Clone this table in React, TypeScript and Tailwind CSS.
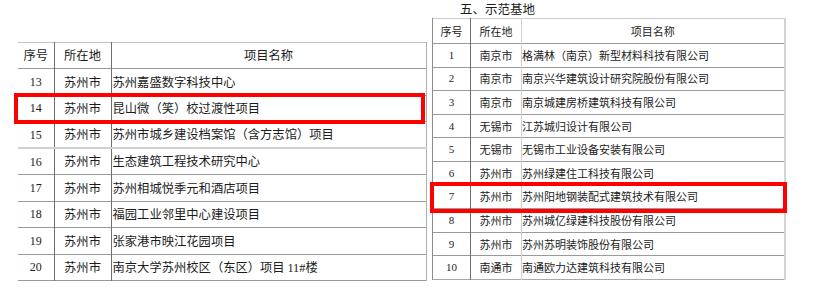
import React from "react";

const leftRows: [string, string, string][] = [
  ["13", "苏州市", "苏州嘉盛数字科技中心"],
  ["14", "苏州市", "昆山微（笑）校过渡性项目"],
  ["15", "苏州市", "苏州市城乡建设档案馆（含方志馆）项目"],
  ["16", "苏州市", "生态建筑工程技术研究中心"],
  ["17", "苏州市", "苏州相城悦季元和酒店项目"],
  ["18", "苏州市", "福园工业邻里中心建设项目"],
  ["19", "苏州市", "张家港市映江花园项目"],
  ["20", "苏州市", "南京大学苏州校区（东区）项目 "],
];

const rightRows: [string, string, string][] = [
  ["1", "南京市", "格满林（南京）新型材料科技有限公司"],
  ["2", "南京市", "南京兴华建筑设计研究院股份有限公司"],
  ["3", "南京市", "南京城建房桥建筑科技有限公司"],
  ["4", "无锡市", "江苏城归设计有限公司"],
  ["5", "无锡市", "无锡市工业设备安装有限公司"],
  ["6", "苏州市", "苏州绿建住工科技有限公司"],
  ["7", "苏州市", "苏州阳地钢装配式建筑技术有限公司"],
  ["8", "苏州市", "苏州城亿绿建科技股份有限公司"],
  ["9", "苏州市", "苏州苏明装饰股份有限公司"],
  ["10", "南通市", "南通欧力达建筑科技有限公司"],
];

const cjk = "font-['Noto_Sans_CJK_SC',sans-serif]";
const serif = "font-['Liberation_Serif','Noto_Sans_CJK_SC',serif]";

export default function App() {
  return (
    <div className={`relative w-[813px] h-[290px] bg-white text-[#1c1c1c] ${cjk} overflow-hidden`}>
      <div className="flex items-start">
        {/* Left table */}
        <div className="ml-[18px] mt-[42px] w-[408px]">
          <table className="w-[408px] border-collapse table-fixed">
            <colgroup>
              <col className="w-[36px]" />
              <col className="w-[57px]" />
              <col className="w-[315px]" />
            </colgroup>
            <thead>
              <tr className="h-[26px] border-t border-t-[#c4c4c4] border-b border-b-[#9a9a9a]">
                <th className="p-0 font-normal text-[12.3px] leading-none text-center border-r border-r-[#6e6e6e]">序号</th>
                <th className="p-0 font-normal text-[12.3px] leading-none text-center border-r border-r-[#6e6e6e]">所在地</th>
                <th className="p-0 font-normal text-[12.3px] leading-none text-center border-r border-r-[#b0b0b0]">项目名称</th>
              </tr>
            </thead>
            <tbody>
              {leftRows.map((r, i) => (
                <tr
                  key={r[0]}
                  className={
                    i === 2
                      ? "h-[26.5px] border-b-2 border-b-[#d0d0d0]"
                      : "h-[26.5px] border-b border-b-[#9a9a9a]"
                  }
                >
                  <td className={`p-0 text-center text-[12px] leading-none ${serif} border-r border-r-[#6e6e6e]`}>{r[0]}</td>
                  <td className="p-0 text-center text-[12.3px] leading-none border-r border-r-[#6e6e6e]">{r[1]}</td>
                  <td className="p-0 pl-[1px] text-left text-[12.3px] leading-none whitespace-nowrap border-r border-r-[#b0b0b0]">
                    {r[2]}
                    {i === 7 && <span className={serif}>11#</span>}
                    {i === 7 && "楼"}
                  </td>
                </tr>
              ))}
            </tbody>
          </table>
        </div>

        {/* Right section */}
        <div className="ml-[6px] w-[352px] flex flex-col">
          <div className="h-[18px] pl-[28px] text-[12.5px] leading-[18px]">五、示范基地</div>
          <table className="w-[352px] border-collapse table-fixed">
            <colgroup>
              <col className="w-[38px]" />
              <col className="w-[51px]" />
              <col className="w-[263px]" />
            </colgroup>
            <thead>
              <tr className="h-[25px] border-t border-t-[#cfcfcf] border-b border-b-[#9a9a9a]">
                <th className="p-0 font-normal text-[11px] leading-none text-center border-l border-l-[#8c8c8c] border-r border-r-[#6e6e6e]">序号</th>
                <th className="p-0 font-normal text-[11px] leading-none text-center border-r border-r-[#d0d0d0]">所在地</th>
                <th className="p-0 font-normal text-[11px] leading-none text-center border-r-2 border-r-[#d4d4d4]">项目名称</th>
              </tr>
            </thead>
            <tbody>
              {rightRows.map((r, i) => (
                <tr
                  key={r[0]}
                  className={
                    i === 9
                      ? "h-[23.6px] border-b border-b-[#a8a8a8]"
                      : "h-[23.6px] border-b border-b-[#9a9a9a]"
                  }
                >
                  <td className={`p-0 text-center text-[11px] leading-none ${serif} border-l border-l-[#8c8c8c] border-r border-r-[#6e6e6e]`}>{r[0]}</td>
                  <td className="p-0 text-center text-[11px] leading-none border-r border-r-[#d0d0d0]">{r[1]}</td>
                  <td className="p-0 text-left text-[11px] leading-none whitespace-nowrap border-r-2 border-r-[#d4d4d4]">{r[2]}</td>
                </tr>
              ))}
            </tbody>
          </table>
        </div>
      </div>

      {/* Red highlight boxes */}
      <div className="absolute left-[14px] top-[93px] w-[411px] h-[31px] border-4 border-[#ff0000] pointer-events-none" />
      <div className="absolute left-[430px] top-[182px] w-[357px] h-[31px] border-4 border-[#ff0000] pointer-events-none" />
    </div>
  );
}
